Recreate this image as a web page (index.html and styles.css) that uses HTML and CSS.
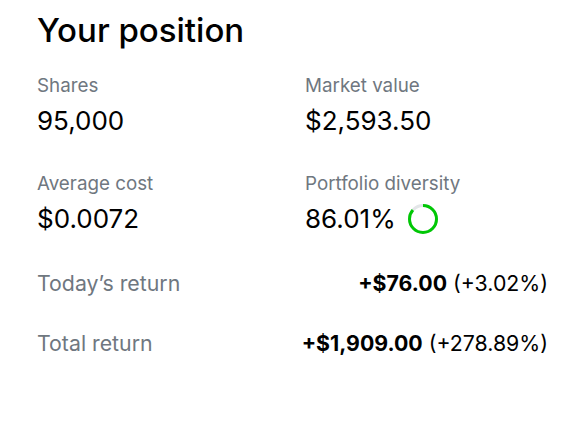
FILE: index.html
```html
<!DOCTYPE html>
<html>
<head>
<meta charset="utf-8">
<link rel="stylesheet" href="styles.css">
</head>
<body>
<main class="position">
  <h1 class="title">Your position</h1>
  <div class="grid">
    <div class="stat">
      <div class="label">Shares</div>
      <div class="value">95,000</div>
    </div>
    <div class="stat">
      <div class="label">Market value</div>
      <div class="value">$2,593.50</div>
    </div>
    <div class="stat">
      <div class="label">Average cost</div>
      <div class="value">$0.0072</div>
    </div>
    <div class="stat">
      <div class="label">Portfolio diversity</div>
      <div class="value with-ring">86.01%
        <svg class="ring" width="30" height="30" viewBox="0 0 30 30">
          <circle cx="15" cy="15" r="13.5" fill="none" stroke="#e3e6e8" stroke-width="3"/>
          <circle cx="15" cy="15" r="13.5" fill="none" stroke="#00c805" stroke-width="3" stroke-dasharray="72.96 84.82" transform="rotate(-90 15 15)"/>
        </svg>
      </div>
    </div>
  </div>
  <div class="row first">
    <span class="row-label">Today’s return</span>
    <span class="row-value"><b>+$76.00</b> (+3.02%)</span>
  </div>
  <div class="row second">
    <span class="row-label">Total return</span>
    <span class="row-value"><b>+$1,909.00</b> (+278.89%)</span>
  </div>
</main>
</body>
</html>
```
FILE: styles.css
```css
html, body {
  margin: 0;
  padding: 0;
  background: #ffffff;
}
body {
  font-family: Inter, "Noto Sans", sans-serif;
  color: #000000;
}
.position {
  padding: 10px 37px 0 37px;
  width: 511px;
}
.title {
  margin: 0;
  font-size: 33px;
  font-weight: 500;
  line-height: 40px;
}
.grid {
  display: grid;
  grid-template-columns: 268px 1fr;
  row-gap: 35px;
  margin-top: 24px;
}
.label {
  font-size: 18.8px;
  line-height: 24px;
  color: #6f7780;
}
.value {
  font-size: 26px;
  line-height: 32px;
  margin-top: 7px;
}
.with-ring {
  display: flex;
  align-items: center;
  gap: 12px;
}
.ring {
  display: block;
}
.row {
  display: flex;
  justify-content: space-between;
  align-items: center;
  font-size: 21.3px;
  line-height: 28px;
}
.row.first {
  margin-top: 34px;
}
.row.second {
  margin-top: 32px;
}
.row-label {
  color: #6f7780;
}
.row-value b {
  font-weight: 700;
}
```
